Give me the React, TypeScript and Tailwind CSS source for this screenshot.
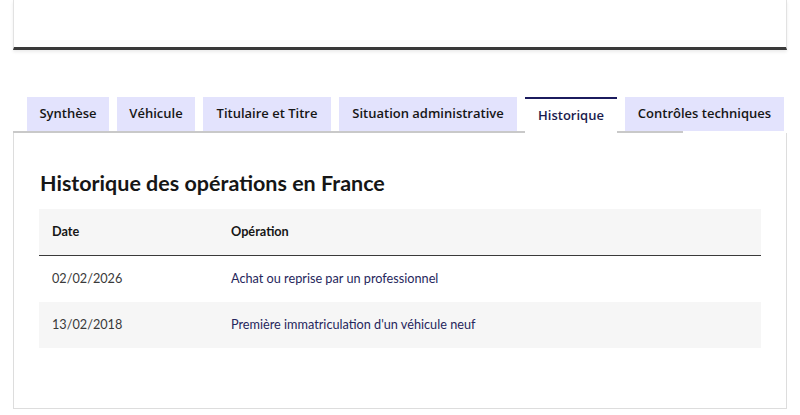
const tabs = [
  { label: "Synthèse", w: "w-[82px]" },
  { label: "Véhicule", w: "w-[78px]" },
  { label: "Titulaire et Titre", w: "w-[128px]" },
  { label: "Situation administrative", w: "w-[178px]" },
  { label: "Historique", w: "w-[92px]", active: true },
  { label: "Contrôles techniques", w: "w-[159px]" },
];

const rows = [
  { date: "02/02/2026", op: "Achat ou reprise par un professionnel" },
  { date: "13/02/2018", op: "Première immatriculation d'un véhicule neuf" },
];

const Tabs = () => {
  return (
    <div className="relative mx-[13px] flex h-[36px] gap-2 pl-[14px]">
      <div className="absolute bottom-0 left-0 h-[2px] w-[670px] bg-[#c9c9c9]"></div>
      {tabs.map((t) =>
        t.active ? (
          <div
            key={t.label}
            className={`relative z-10 flex h-[36px] items-center justify-center border-t-2 border-[#1b1b5e] bg-white text-[13px] font-semibold text-[#1b1b4e] ${t.w}`}
          >
            {t.label}
          </div>
        ) : (
          <div
            key={t.label}
            className={`flex h-[34px] items-center justify-center bg-[#e3e3fd] text-[13px] font-semibold text-[#161616] ${t.w}`}
          >
            {t.label}
          </div>
        )
      )}
    </div>
  );
};

const HistoryTable = () => {
  return (
    <div className="w-[722px] font-['Lato',sans-serif] text-[12.7px]">
      <div className="flex h-[47px] items-center border-b border-[#3a3a3a] bg-[#f6f6f6] font-bold text-[#161616]">
        <div className="w-[192px] pl-[13px]">Date</div>
        <div>Opération</div>
      </div>
      {rows.map((r, i) => (
        <div
          key={r.date}
          className={`flex h-[46px] items-center ${i % 2 === 1 ? "bg-[#f6f6f6]" : "bg-white"}`}
        >
          <div className="w-[192px] pl-[13px] text-[#3a3a3a]">{r.date}</div>
          <div className="text-[#26265c]">{r.op}</div>
        </div>
      ))}
    </div>
  );
}

export default function App() {
  return (
    <div className="h-[415px] w-[800px] overflow-hidden bg-white font-['Open_Sans',sans-serif]">
      <div className="mx-[13px] h-[50px] border-x border-b-[3px] border-x-[#e2e2e2] border-b-[#3a3a3a] shadow-[0_2px_3px_rgba(0,0,0,0.08)]"></div>
      <div className="h-[47px]"></div>
      <Tabs />
      <div className="mx-[13px] h-[276px] border-x border-b border-[#dddddd] px-[25px] pt-[36px]">
        <h2 className="mb-[12px] pl-px font-['Lato',sans-serif] text-[21.5px] font-bold leading-[28px] text-[#161616]">
          Historique des opérations en France
        </h2>
        <HistoryTable />
      </div>
    </div>
  );
}
